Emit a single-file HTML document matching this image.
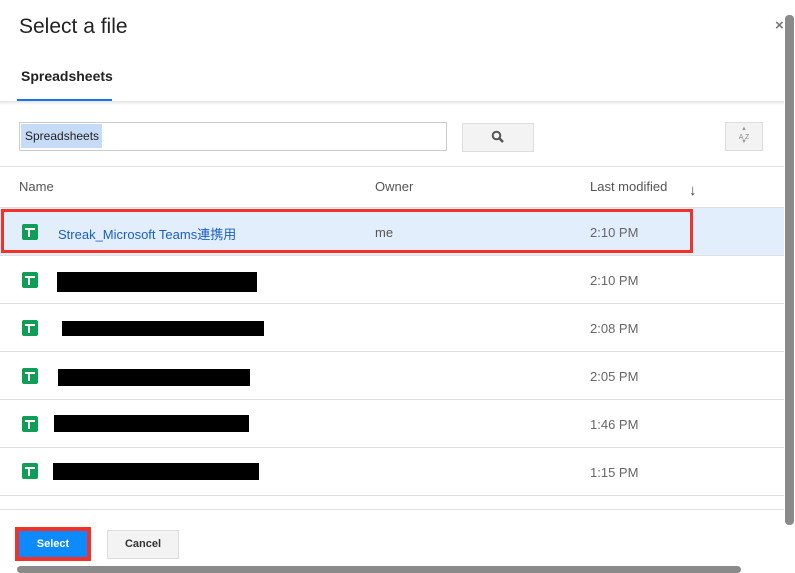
<!DOCTYPE html>
<html><head><meta charset="utf-8"><style>
*{margin:0;padding:0;box-sizing:border-box}
body{width:795px;height:573px;background:#fff;position:relative;overflow:hidden;font-family:"Liberation Sans","Noto Sans CJK JP",sans-serif;color:#333}
.a{position:absolute}
.line{position:absolute;left:0;width:784px;height:1px;background:#e0e0e0}
.icon{position:absolute;left:22px;width:16px;height:16px;background:#0f9d58;border-radius:2px}
.icon:before{content:"";position:absolute;left:3px;top:4px;width:10px;height:2px;background:#fff}
.icon:after{content:"";position:absolute;left:6px;top:4px;width:2px;height:9px;background:#fff}
.t{position:absolute;left:590px;font-size:13px;color:#666}
.bar{position:absolute;background:#000}
</style></head><body>
<div class="a" style="left:19px;top:15px;font-size:21px;color:#222">Select a file</div>
<div class="a" style="left:775px;top:17px;font-size:15px;color:#777;font-weight:bold">×</div>
<div class="a" style="left:21px;top:68px;font-size:14px;font-weight:bold;color:#222">Spreadsheets</div>
<div class="a" style="left:17px;top:99px;width:95px;height:3px;background:#1a73e8"></div>
<div class="a" style="left:0;top:101px;width:784px;height:4px;background:linear-gradient(#e4e4e4,#fff)"></div>
<div class="a" style="left:19px;top:122px;width:428px;height:29px;border:1px solid #ccc;background:#fff"></div>
<div class="a" style="left:21px;top:124px;width:81px;height:24px;background:#c6dbf7;font-size:12px;line-height:24px;padding-left:4px;color:#222">Spreadsheets</div>
<div class="a" style="left:462px;top:123px;width:72px;height:29px;border:1px solid #ddd;background:#f3f3f3"></div>
<svg class="a" style="left:491px;top:130px" width="14" height="14" viewBox="0 0 14 14"><circle cx="5.5" cy="5.5" r="3.8" fill="none" stroke="#555" stroke-width="2"/><path d="M8.3 8.3L12 12" stroke="#555" stroke-width="2.5"/></svg>
<div class="a" style="left:725px;top:122px;width:38px;height:29px;border:1px solid #ddd;background:#f3f3f3;font-size:7px;color:#888;text-align:center;line-height:29px">A Z</div>
<div class="a" style="left:741px;top:126px;font-size:6px;color:#999">▲</div>
<div class="a" style="left:741px;top:139px;font-size:6px;color:#999">▼</div>
<div class="line" style="top:166px"></div>
<div class="a" style="left:19px;top:179px;font-size:13px;color:#555">Name</div>
<div class="a" style="left:375px;top:179px;font-size:13px;color:#555">Owner</div>
<div class="a" style="left:590px;top:179px;font-size:13px;color:#555">Last modified</div>
<div class="a" style="left:689px;top:182px;font-size:15px;color:#444">↓</div>
<div class="line" style="top:207px"></div>
<div class="a" style="left:0;top:208px;width:784px;height:47px;background:#e3eefc"></div>
<div class="a" style="left:1px;top:209px;width:692px;height:44px;border:3px solid #f03228"></div>
<div class="icon" style="top:224px"></div>
<div class="a" style="left:58px;top:224px;font-size:13px;color:#1a5fc4">Streak_Microsoft Teams連携用</div>
<div class="a" style="left:375px;top:225px;font-size:13px;color:#555">me</div>
<div class="t" style="top:225px">2:10 PM</div>
<div class="line" style="top:255px"></div>
<div class="icon" style="top:272px"></div><div class="bar" style="left:57px;top:272px;width:200px;height:20px"></div><div class="t" style="top:273px">2:10 PM</div>
<div class="line" style="top:303px"></div>
<div class="icon" style="top:320px"></div><div class="bar" style="left:62px;top:321px;width:202px;height:15px"></div><div class="t" style="top:321px">2:08 PM</div>
<div class="line" style="top:351px"></div>
<div class="icon" style="top:368px"></div><div class="bar" style="left:58px;top:369px;width:192px;height:17px"></div><div class="t" style="top:369px">2:05 PM</div>
<div class="line" style="top:399px"></div>
<div class="icon" style="top:416px"></div><div class="bar" style="left:54px;top:415px;width:195px;height:17px"></div><div class="t" style="top:417px">1:46 PM</div>
<div class="line" style="top:447px"></div>
<div class="icon" style="top:463px"></div><div class="bar" style="left:53px;top:463px;width:206px;height:17px"></div><div class="t" style="top:465px">1:15 PM</div>
<div class="line" style="top:495px"></div>
<div class="line" style="top:509px"></div>
<div class="a" style="left:15px;top:527px;width:76px;height:34px;background:#f03228"></div>
<div class="a" style="left:19px;top:531px;width:68px;height:26px;background:#0d8aff;color:#fff;font-size:11px;font-weight:bold;text-align:center;line-height:26px">Select</div>
<div class="a" style="left:107px;top:530px;width:72px;height:29px;border:1px solid #ddd;background:#f3f3f3;color:#333;font-size:11px;font-weight:bold;text-align:center;line-height:27px">Cancel</div>
<div class="a" style="left:785px;top:15px;width:9px;height:510px;background:#8a8a8a;border-radius:4px"></div>
<div class="a" style="left:17px;top:566px;width:724px;height:7px;background:#8a8a8a;border-radius:4px"></div>
</body></html>
